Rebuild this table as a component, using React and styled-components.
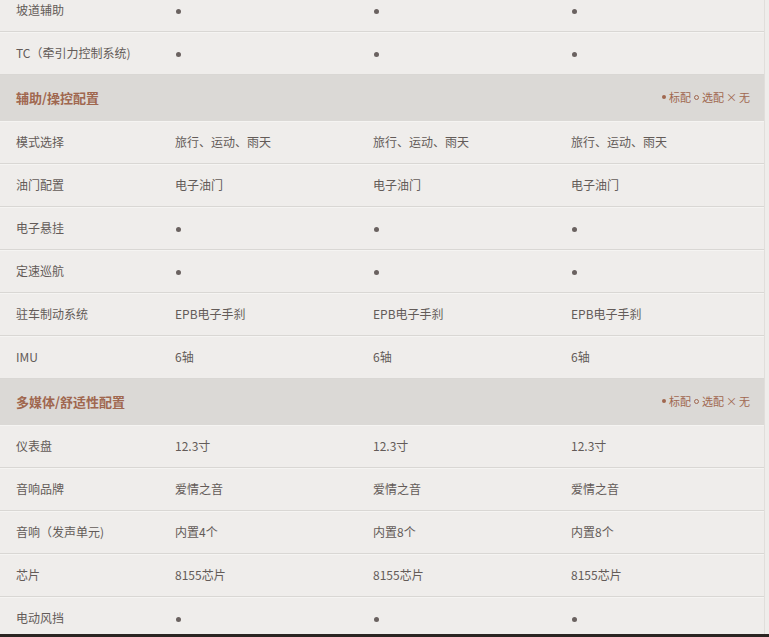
import React from 'react';
import styled, { createGlobalStyle } from 'styled-components';

const GlobalStyle = createGlobalStyle`
    html, body {
        margin: 0;
        padding: 0;
        background-color: #efedeb;
        overflow: hidden;
    }
    body {
        font-family: "Noto Sans CJK SC", "Noto Sans", sans-serif;
        color: #5b5350;
    }
`;

const Page = styled.div`
    width: 769px;
    height: 637px;
    overflow: hidden;
    position: relative;
`;

const Table = styled.div`
    width: 764px;
    margin-top: -11px;
    border-right: 1px solid #e0dedb;
`;

const Row = styled.div`
    display: grid;
    grid-template-columns: 159px 198px 198px 1fr;
    height: 43px;
    align-items: center;
    border-bottom: 1px solid #d9d7d4;
    box-shadow: inset 0 1px 0 #f5f4f2;
    box-sizing: border-box;
`;

const Cell = styled.div`
    padding-left: 16px;
    font-size: 12px;
    line-height: 16px;
    color: #635b58;
    white-space: nowrap;
`;

const Dot = styled.span`
    display: inline-block;
    width: 5px;
    height: 5px;
    border-radius: 50%;
    background-color: #6a6260;
    margin-left: 1px;
    vertical-align: middle;
`;

const SectionHeader = styled.div`
    display: flex;
    justify-content: space-between;
    align-items: center;
    height: 46px;
    padding: 0 14px 2px 16px;
    background-color: #dbd9d6;
    box-sizing: border-box;
`;

const SectionTitle = styled.span`
    font-size: 13px;
    font-weight: 600;
    color: #a0674f;
`;

const Legend = styled.span`
    font-size: 11px;
    color: #a0674f;
    display: flex;
    align-items: center;
    gap: 2px;
`;

const LegendDot = styled.span`
    display: inline-block;
    width: ${p => (p.$hollow ? '5px' : '4px')};
    height: ${p => (p.$hollow ? '5px' : '4px')};
    margin: 0 1px;
    border-radius: 50%;
    box-sizing: border-box;
    background-color: ${p => (p.$hollow ? 'transparent' : '#a0674f')};
    border: ${p => (p.$hollow ? '1px solid #a0674f' : 'none')};
`;

const BottomStrip = styled.div`
    position: absolute;
    left: 0;
    right: 0;
    bottom: 0;
    height: 3px;
    background-color: #2a2522;
`;

const DOT = '__dot__';

const sections = [
  {
    rows: [
      ['坡道辅助', DOT, DOT, DOT],
      ['TC（牵引力控制系统)', DOT, DOT, DOT],
    ],
  },
  {
    title: '辅助/操控配置',
    rows: [
      ['模式选择', '旅行、运动、雨天', '旅行、运动、雨天', '旅行、运动、雨天'],
      ['油门配置', '电子油门', '电子油门', '电子油门'],
      ['电子悬挂', DOT, DOT, DOT],
      ['定速巡航', DOT, DOT, DOT],
      ['驻车制动系统', 'EPB电子手刹', 'EPB电子手刹', 'EPB电子手刹'],
      ['IMU', '6轴', '6轴', '6轴'],
    ],
  },
  {
    title: '多媒体/舒适性配置',
    rows: [
      ['仪表盘', '12.3寸', '12.3寸', '12.3寸'],
      ['音响品牌', '爱情之音', '爱情之音', '爱情之音'],
      ['音响（发声单元)', '内置4个', '内置8个', '内置8个'],
      ['芯片', '8155芯片', '8155芯片', '8155芯片'],
      ['电动风挡', DOT, DOT, DOT],
    ],
  },
];

function Header({ title }) {
  return (
    <SectionHeader>
      <SectionTitle>{title}</SectionTitle>
      <Legend>
        <LegendDot />标配<LegendDot $hollow />选配<span>×</span>无
      </Legend>
    </SectionHeader>
  );
}

export default function App() {
  return (
    <Page>
      <GlobalStyle />
      <Table>
        {sections.map((section, i) => (
          <React.Fragment key={i}>
            {section.title && <Header title={section.title} />}
            {section.rows.map((row, j) => (
              <Row key={j}>
                {row.map((value, k) => (
                  <Cell key={k}>{value === DOT ? <Dot /> : value}</Cell>
                ))}
              </Row>
            ))}
          </React.Fragment>
        ))}
      </Table>
      <BottomStrip />
    </Page>
  );
}
